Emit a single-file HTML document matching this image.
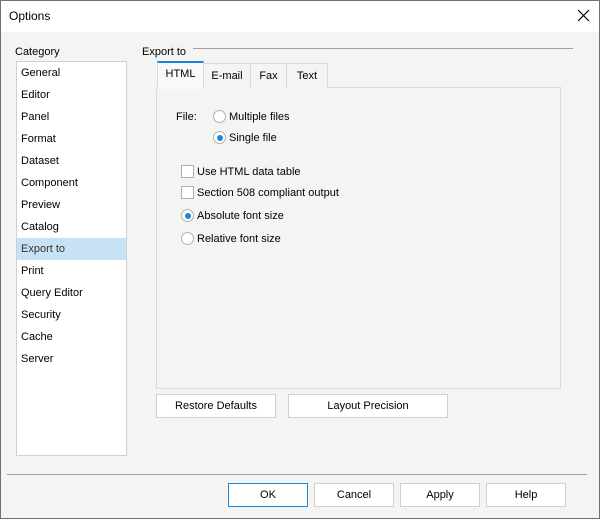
<!DOCTYPE html>
<html><head><style>
*{margin:0;padding:0;box-sizing:border-box}
body{width:600px;height:519px;overflow:hidden;background:#f4f5f3;font-family:"Liberation Sans",sans-serif;font-size:11px;color:#000}
.a{position:absolute}
#win{position:absolute;left:0;top:0;width:600px;height:519px;border:1px solid #707070;background:#f4f5f3}
#title{position:absolute;left:0;top:0;width:598px;height:31px;background:#fff}
.t{position:absolute;line-height:14px;white-space:nowrap;margin-top:1px}
.list{left:16px;top:61px;width:111px;height:395px;background:#fff;border:1px solid #d0d0d0}
.li{position:absolute;left:0;width:109px;height:22px;line-height:23px;padding-left:4px}
.tab{position:absolute;top:63px;height:25px;border:1px solid #d9d9d9;border-bottom:none;background:#f4f5f3;text-align:center;line-height:24px}
.btn{position:absolute;height:24px;border:1px solid #d0d0d0;background:#fff;text-align:center;line-height:23px}
.rad{position:absolute;width:13px;height:13px;border:1px solid #b0b0b0;border-radius:50%;background:#fff}
.rad.on::after{content:"";position:absolute;left:2.5px;top:2.5px;width:6px;height:6px;border-radius:50%;background:#1a86d8}
.chk{position:absolute;width:13px;height:13px;border:1px solid #b0b0b0;background:#fff}
</style></head><body>
<div id="win">
<div id="title"></div>
</div>
<div class="t" style="left:9px;top:8px;font-size:12px">Options</div>
<svg class="a" style="left:577px;top:9px" width="13" height="13"><path d="M1 1L12 12M12 1L1 12" stroke="#000" stroke-width="1.2"/></svg>

<div class="t" style="left:15px;top:44px">Category</div>
<div class="a list">
<div class="li" style="top:0">General</div>
<div class="li" style="top:22px">Editor</div>
<div class="li" style="top:44px">Panel</div>
<div class="li" style="top:66px">Format</div>
<div class="li" style="top:88px">Dataset</div>
<div class="li" style="top:110px">Component</div>
<div class="li" style="top:132px">Preview</div>
<div class="li" style="top:154px">Catalog</div>
<div class="li" style="top:176px;background:#c6e2f4;color:#333">Export to</div>
<div class="li" style="top:198px">Print</div>
<div class="li" style="top:220px">Query Editor</div>
<div class="li" style="top:242px">Security</div>
<div class="li" style="top:264px">Cache</div>
<div class="li" style="top:286px">Server</div>
</div>

<div class="t" style="left:142px;top:44px">Export to</div>
<div class="a" style="left:193px;top:48px;width:380px;height:1px;background:#a0a0a0"></div>

<div class="a" style="left:156px;top:87px;width:405px;height:302px;border:1px solid #d9d9d9"></div>
<div class="tab" style="left:203px;width:48px">E-mail</div>
<div class="tab" style="left:250px;width:37px">Fax</div>
<div class="tab" style="left:286px;width:42px">Text</div>
<div class="tab" style="left:157px;top:61px;height:28px;width:47px;background:#f9f9f9;border-top:2px solid #1a86d8;line-height:22px">HTML</div>

<div class="t" style="left:176px;top:109px">File:</div>
<div class="rad" style="left:213px;top:110px"></div>
<div class="t" style="left:229px;top:109px">Multiple files</div>
<div class="rad on" style="left:213px;top:131px"></div>
<div class="t" style="left:229px;top:130px">Single file</div>

<div class="chk" style="left:181px;top:165px"></div>
<div class="t" style="left:197px;top:164px">Use HTML data table</div>
<div class="chk" style="left:181px;top:186px"></div>
<div class="t" style="left:197px;top:185px">Section 508 compliant output</div>
<div class="rad on" style="left:181px;top:209px"></div>
<div class="t" style="left:197px;top:208px">Absolute font size</div>
<div class="rad" style="left:181px;top:232px"></div>
<div class="t" style="left:197px;top:231px">Relative font size</div>

<div class="btn" style="left:156px;top:394px;width:120px">Restore Defaults</div>
<div class="btn" style="left:288px;top:394px;width:160px">Layout Precision</div>

<div class="a" style="left:7px;top:474px;width:580px;height:1px;background:#a0a0a0"></div>
<div class="btn" style="left:228px;top:483px;width:80px;border-color:#1a86d8">OK</div>
<div class="btn" style="left:314px;top:483px;width:80px">Cancel</div>
<div class="btn" style="left:400px;top:483px;width:80px">Apply</div>
<div class="btn" style="left:486px;top:483px;width:80px">Help</div>
</body></html>
